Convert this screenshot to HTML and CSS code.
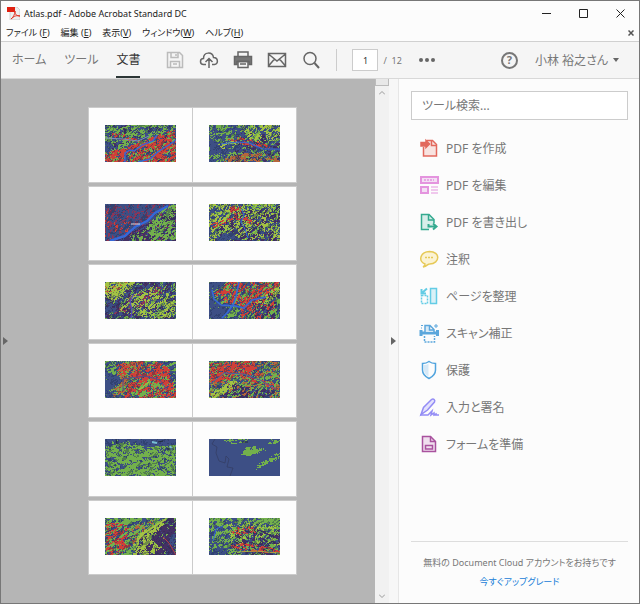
FILE: index.html
```html
<!DOCTYPE html>
<html lang="ja">
<head>
  <meta charset="UTF-8" />
  <meta name="viewport" content="width=device-width, initial-scale=1.0" />
  <title>Atlas.pdf - Adobe Acrobat Standard DC</title>
  <link rel="stylesheet" href="styles.css">
</head>
<body>
  <div class="window">

    <!-- Title bar -->
    <header class="titlebar">
      <svg class="app-icon" viewBox="0 0 13 13">
        <path d="M3 0h7l3 3v10H3z" fill="#eee" stroke="#bbb" stroke-width=".6"/>
        <path d="M0 0h8v5H0z" fill="#e02010"/>
        <path d="M4 12c2-1 4-5 4-8 0 4 2 5 5 5-3-1-6 0-9 3z" fill="none" stroke="#e03020"/>
      </svg>
      <h1 class="title">Atlas.pdf - Adobe Acrobat Standard DC</h1>
      <div class="window-buttons">
        <button type="button" aria-label="最小化"><svg viewBox="0 0 9 9"><path d="M0 4.5h9"/></svg></button>
        <button type="button" aria-label="最大化"><svg viewBox="0 0 9 9"><path d="M.5.5h8v8h-8z"/></svg></button>
        <button type="button" aria-label="閉じる"><svg viewBox="0 0 9 9"><path d="M.5.5l8 8M8.5.5l-8 8"/></svg></button>
      </div>
    </header>

    <!-- Menu bar -->
    <nav class="menubar">
      <button type="button">ファイル (<u>F</u>)</button>
      <button type="button">編集 (<u>E</u>)</button>
      <button type="button">表示(<u>V</u>)</button>
      <button type="button">ウィンドウ(<u>W</u>)</button>
      <button type="button">ヘルプ(<u>H</u>)</button>
      <button type="button" class="close-doc" aria-label="文書を閉じる"><svg viewBox="0 0 6 6"><path d="M.5.5l5 5M5.5.5l-5 5"/></svg></button>
    </nav>

    <!-- Toolbar -->
    <div class="toolbar">
      <div class="tabs">
        <button type="button" class="tab">ホーム</button>
        <button type="button" class="tab">ツール</button>
        <button type="button" class="tab active">文書</button>
      </div>
      <div class="actions">
        <button type="button" class="disabled" aria-label="保存"><svg viewBox="0 0 20 20"><path d="M2.5 2.5h12l3 3v12h-15zM6 2.5v5h7v-5M5.500 17.500v-6h9v6M11 4v2M8 14h4"/></svg></button>
        <button type="button" aria-label="アップロード"><svg viewBox="0 0 20 20"><path d="M7 14.500H4.500C.5 14.500.5 8.500 4.500 8.500 4.500 1.500 13.500 1.500 14.500 7.500c5 0 5 7 1 7H13M10 18V9M6.500 12L10 8.500l3.500 3.500"/></svg></button>
        <button type="button" aria-label="印刷"><svg viewBox="0 0 20 20"><path d="M5 6V2h10v4"/><path d="M1.500 6.500h17v8H16v-3H4v3H1.500z" fill="currentColor"/><path d="M5 11.500h10v6H5zM7 14h6"/></svg></button>
        <button type="button" aria-label="メール"><svg viewBox="0 0 20 20"><path d="M1.500 3.500h17v13h-17zM1.500 4l8.500 7 8.500-7M1.500 16l6-7M18.500 16l-6-7"/></svg></button>
        <button type="button" aria-label="検索"><svg viewBox="0 0 20 20"><circle cx="9" cy="8.500" r="6"/><path d="M13.500 13l4.500 5" stroke-width="2"/></svg></button>
      </div>
      <div class="pager">
        <input type="text" id="page" value="1" aria-label="ページ">
        <label for="page">/&nbsp; 12</label>
      </div>
      <button type="button" class="more" aria-label="その他"><svg viewBox="0 0 16 4"><circle cx="2" cy="2" r="2"/><circle cx="8" cy="2" r="2"/><circle cx="14" cy="2" r="2"/></svg></button>
      <div class="account">
        <button type="button" class="help" aria-label="ヘルプ">?</button>
        <button type="button" class="user">小林 裕之さん <span class="caret"></span></button>
      </div>
    </div>

    <main class="content">
      <!-- Document -->
      <section class="document">
        <button type="button" class="side-toggle" aria-label="ナビゲーションパネル"><span class="arrow"></span></button>
        <div class="pages" id="pages"></div>
      </section>
      <div class="scrollbar">
        <span class="thumb"></span>
        <svg viewBox="0 0 6 4"><path d="M0 3.500l3-3 3 3"/></svg>
        <svg class="down" viewBox="0 0 6 4"><path d="M0 .5l3 3 3-3"/></svg>
      </div>
      <button type="button" class="splitter" aria-label="ツールパネル"><span class="arrow"></span></button>

      <!-- Tools panel -->
      <aside class="tools">
        <input type="text" class="search" placeholder="ツール検索..." aria-label="ツール検索">
        <ul class="tool-list">
          <li><a href="#" class="tool">
            <svg viewBox="0 0 20 20" stroke="#e2685c"><path d="M4.500 9v9h13V6.500l-4-4h-6" fill="#f8e3e0"/><path d="M12.500 2.500v5h5"/><path d="M2 4.500h5V2.500L10.500 6 7 9.500V8H2z" fill="#e2685c"/></svg>
            PDF を作成</a></li>
          <li><a href="#" class="tool">
            <svg viewBox="0 0 20 20" stroke="#e494de"><path d="M2 2h17v6H2zM2 12h7v6H2z" fill="#f3dff4" stroke-width="2"/><path d="M5 5h10" stroke-dasharray="2 1"/><path d="M12 12h7M12 15h7M12 18h7" stroke-width="1"/></svg>
            PDF を編集</a></li>
          <li><a href="#" class="tool">
            <svg viewBox="0 0 20 20" stroke="#35aa90"><path d="M10 17.500H2.500v-15H10l5 5V11" fill="#d7eeea"/><path d="M9.500 2.500V8H15"/><path d="M9.500 12v2.500H17M14 11.500l3.500 3-3.500 3" stroke-width="2"/></svg>
            PDF を書き出し</a></li>
          <li><a href="#" class="tool">
            <svg viewBox="0 0 20 20" stroke="#e6c957"><path d="M6 15C-1 12 1 3 10.500 2.500c11 0 11 12 0 12.500-2 0-2 2-6.500 3 2-1 2-2 2-3z" fill="#fbf3d4"/><path d="M6 8.500h9" stroke-dasharray="2 1"/></svg>
            注釈</a></li>
          <li><a href="#" class="tool">
            <svg viewBox="0 0 20 20" stroke="#63cce5"><path d="M11.500 2.500h6v15h-6z" fill="#d9f1f7"/><path d="M2.500 9.500h6v8h-6z" stroke-dasharray="2 1"/><path d="M8 2.500L3 7M2.500 3v4.500H7" stroke-width="2"/></svg>
            ページを整理</a></li>
          <li><a href="#" class="tool">
            <svg viewBox="0 0 20 20" stroke="#5ca7dc"><path d="M2 7v6M18.500 7v6M1 10h19" stroke-width="3"/><path d="M6 9V2.500h5l4 4V9M10.500 2.500V7H15" fill="#d9eaf6"/><path d="M5.500 13v6h10v-6" stroke-dasharray="2 1"/><path d="M2 2.500h2M17 1v4M15 3h4M2 5h1" stroke-width="1"/></svg>
            スキャン補正</a></li>
          <li><a href="#" class="tool">
            <svg viewBox="0 0 20 20" stroke="#51a4de"><path d="M10 1.500c2 1.500 4 2 6.500 2V10c0 4-2.500 6.500-6.500 8.500C6 16.500 3.500 14 3.500 10V3.500c2.500 0 4.500-.5 6.500-2z"/><path d="M9.500 3.500v13C7 15 5 13 5 10V5c2 0 3-.5 4.500-1.500z" fill="#d6e9f7" stroke="none"/></svg>
            保護</a></li>
          <li><a href="#" class="tool">
            <svg viewBox="0 0 20 20" stroke="#938cf5"><path d="M2 17.500l2.500-7 8-8c2-1.500 4 .5 3 2.500l-7 8z" fill="#e3e1fc"/><path d="M1 18h8l4-4-1 4 3-2v2l2-1v1h3"/></svg>
            入力と署名</a></li>
          <li><a href="#" class="tool">
            <svg viewBox="0 0 20 20" stroke="#a9529e"><path d="M3.500 2.500h8l5 5v10h-13z" fill="#f0dfee"/><path d="M11.500 2.500v5h5M6.500 11.500h7v3.500h-7z"/></svg>
            フォームを準備</a></li>
        </ul>
        <footer class="upgrade">
          <p>無料の Document Cloud アカウントをお持ちです</p>
          <a href="#">今すぐアップグレード</a>
        </footer>
      </aside>
    </main>
  </div>
  <script src="maps.js"></script>
</body>
</html>
```
FILE: styles.css
```css
* {
  box-sizing: border-box;
}

body {
  margin: 0;
  font-family: "Noto Sans", "Noto Sans CJK JP", sans-serif;
  font-size: 12px;
  font-feature-settings: "palt";
  color: #777;
}

button,
input {
  font: inherit;
  font-feature-settings: inherit;
  color: inherit;
}

button {
  padding: 0;
  border: none;
  background: none;
  white-space: nowrap;
}

svg {
  display: block;
  fill: none;
}

.window {
  display: flex;
  flex-direction: column;
  height: 100vh;
  border: 1px solid #777;
  background: #fcfcfc;
}

/* Title bar */
.titlebar {
  display: flex;
  align-items: center;
  height: 24px;
  padding-left: 6px;
}
.app-icon {
  width: 13px;
  height: 13px;
  margin-right: 4px;
}
.title {
  margin: 0;
  font-size: 9px;
  font-weight: 400;
  color: #222;
}
.window-buttons {
  display: flex;
  margin-left: auto;
}
.window-buttons button {
  display: flex;
  justify-content: center;
  width: 37px;
}
.window-buttons svg {
  width: 9px;
  height: 9px;
  stroke: #222;
}

/* Menu bar */
.menubar {
  display: flex;
  align-items: center;
  gap: 11px;
  height: 16px;
  padding: 0 5px;
  font-size: 9px;
  line-height: 16px;
  color: #222;
}
.close-doc {
  margin-left: auto;
}
.close-doc svg {
  width: 6px;
  height: 6px;
  stroke: #555;
  stroke-width: 1.5;
}

/* Toolbar */
.toolbar {
  display: flex;
  align-items: center;
  height: 38px;
  padding: 0 20px 0 11px;
  border-top: 1px solid #d0d0d0;
  border-bottom: 1px solid #d8d8d8;
  background: #f5f5f5;
}
.tabs {
  display: flex;
  align-self: stretch;
  gap: 18px;
}
.tab {
  border-bottom: 2px solid transparent;
}
.tab.active {
  color: #333;
  border-color: #2c3636;
}
.actions {
  display: flex;
  gap: 14px;
  margin-left: 25px;
  padding-right: 15px;
  border-right: 1px solid #ccc;
}
.actions svg {
  width: 20px;
  height: 22px;
  stroke: #666;
  stroke-width: 1.5;
}
.actions .disabled svg {
  stroke: #bbb;
}
.pager {
  display: flex;
  align-items: center;
  gap: 5px;
  margin-left: 15px;
  font-size: 9px;
}
.pager input {
  width: 26px;
  height: 22px;
  border: 1px solid #ccc;
  background: #fff;
  text-align: center;
  color: #333;
}
.more {
  margin-left: 17px;
}
.more svg {
  width: 16px;
  height: 4px;
  fill: #666;
}
.account {
  display: flex;
  align-items: center;
  gap: 17px;
  margin-left: auto;
}
.help {
  width: 17px;
  height: 17px;
  border: 2px solid #777;
  border-radius: 50%;
  font-size: 11px;
  font-weight: 700;
  line-height: 12px;
}
.user {
  display: flex;
  align-items: center;
  gap: 5px;
}
.caret {
  border: 3px solid transparent;
  border-top: 4px solid #666;
  border-bottom: none;
}

/* Document */
.content {
  display: flex;
  flex: 1;
  min-height: 0;
}
.document {
  display: flex;
  flex: 1;
  background: #b5b5b5;
}
.side-toggle {
  width: 8px;
}
.arrow {
  display: block;
  width: 5px;
  margin: 0 auto;
  border: 4px solid transparent;
  border-left: 5px solid #666;
  border-right: none;
}
.pages {
  display: grid;
  grid-template-columns: 103px 103px;
  grid-auto-rows: 1fr;
  gap: 5px 1px;
  margin: 0 auto;
  padding: 29px 0;
}
.page {
  padding: 17px 16px 0 16px;
  background: #fdfdfd;
  outline: 1px solid #cbcbcb;
}
.map {
  width: 100%;
  height: 37px;
}
.scrollbar {
  display: flex;
  flex-direction: column;
  align-items: center;
  width: 14px;
  padding-bottom: 5px;
  background: #f1f1f1;
}
.scrollbar svg {
  width: 6px;
  height: 4px;
  margin-top: 5px;
  stroke: #999;
}
.scrollbar .down {
  margin-top: auto;
}
.thumb {
  width: 14px;
  height: 7px;
  border: 1px solid #bbb;
  border-top: none;
  background: #e8e8e8;
}
.splitter {
  width: 10px;
  border-right: 1px solid #e6e6e6;
  background: #f7f7f7;
}

/* Tools panel */
.tools {
  display: flex;
  flex-direction: column;
  width: 240px;
  padding: 12px 11px 12px 12px;
}
.search {
  width: 100%;
  height: 29px;
  padding: 0 10px;
  border: 1px solid #ccc;
  background: #fff;
}
.search::placeholder {
  color: #777;
  opacity: 1;
}
.tool-list {
  margin: 0;
  padding: 9px 8px;
  list-style: none;
}
.tool {
  display: flex;
  align-items: center;
  gap: 7px;
  height: 37px;
  color: #777;
  text-decoration: none;
}
.tool svg {
  width: 20px;
  height: 20px;
  stroke-width: 1.5;
}
.upgrade {
  margin-top: auto;
  padding-top: 11px;
  border-top: 1px solid #ddd;
  font-size: 9px;
  line-height: 19px;
  text-align: center;
  white-space: nowrap;
}
.upgrade p {
  margin: 0;
}
.upgrade a {
  color: #2080d8;
  text-decoration: none;
}
```
FILE: maps.js
```js
// Thumbnails of the atlas pages. Each map is a grid of small cells,
// coloured by slope (noise stretched along the ridges) and by zone.
const W = 71;
const H = 37;
const NAVY = "#3d4f85";
const BLUE = "#3568d8";
const GREEN = "#73b04c";
const LIME = "#a3c244";
const RED = "#cf4038";
const PURPLE = "#443063";
const WINE = "#8b3658";
const ORANGE = "#b5663c";

const ALL = [0, 0, W, 0, W, H, 0, H];

// layer: colour, polygon, density, ridge angle
const maps = [
  { layers: [[GREEN, ALL, 0.52, -25], [PURPLE, ALL, 0.2, -25], [RED, [71, 4, 71, 37, 0, 37, 0, 28, 22, 22, 48, 12], 0.58, -30], [RED, [8, 7, 30, 12, 34, 17, 5, 14], 0.4, 0]],
    lines: [[BLUE, "M20 37v-9l5-3 4 1 8-6 11-4 4-6M33 37l12-3 9-8 10-6 7-5", 1.4], ["#7e8fba", "M0 13l18 1 15 2 11-5", 1]] },
  { layers: [[GREEN, ALL, 0.45, -30], [LIME, [26, 0, 71, 0, 71, 15, 46, 18], 0.48, -55], [PURPLE, [30, 8, 71, 9, 71, 37, 20, 37], 0.32, 15], [RED, [18, 15, 32, 11, 61, 21, 58, 24, 36, 20], 0.5, 15], [ORANGE, [16, 32, 40, 27, 71, 31, 71, 37, 14, 37], 0.45, 0], [NAVY, [0, 12, 12, 19, 36, 20, 30, 26, 9, 30, 0, 27], 0.85, -20], [LIME, [8, 20, 22, 16, 36, 17, 28, 21, 15, 24], 0.48, -20]],
    lines: [[BLUE, "M12 19l17-2 11 1 14 6 17 0", 1.2]] },
  { layers: [[WINE, ALL, 0.36, -70], [PURPLE, [71, 4, 71, 37, 10, 37, 30, 26], 0.6, -35], [GREEN, [71, 0, 71, 37, 47, 37, 42, 24, 58, 4], 0.6, -42], [GREEN, [27, 31, 47, 24, 50, 37, 27, 37], 0.35, -42], [RED, [0, 2, 8, 12, 25, 12, 26, 26, 0, 36], 0.25, -60]],
    lines: [[BLUE, "M5 37l15-5 10-9 12-6 8-8 13-7", 2.4], ["#d8d8e0", "M26 20h9", 1]] },
  { layers: [[LIME, ALL, 0.54, -50], [PURPLE, [24, 8, 71, 2, 71, 37, 0, 37], 0.38, -45], [GREEN, ALL, 0.25, -40], [RED, [22, 0, 33, 3, 33, 11, 50, 20, 48, 24, 30, 15, 0, 25, 0, 20, 20, 14], 0.42, -20], [NAVY, [8, 33, 20, 27, 32, 36, 10, 37], 0.88, 0]],
    lines: [[BLUE, "M33 5l2 7-3 6 4 7 3 9", 1]] },
  { layers: [[PURPLE, ALL, 0.45, -45], [LIME, [25, 14, 48, 4, 71, 14, 71, 35, 48, 37, 10, 29], 0.5, -40], [GREEN, ALL, 0.28, -40], [WINE, [8, 32, 30, 13, 60, 3, 58, 10, 26, 31], 0.4, -35], [LIME, [0, 0, 31, 0, 10, 19, 0, 16], 0.7, -30], [ORANGE, [2, 4, 21, 0, 18, 7, 0, 11], 0.35, 0]],
    lines: [["#574bc2", "M28 13l-3 7 2 7-1 9", 1.2]] },
  { layers: [[GREEN, ALL, 0.5, -55], [RED, [20, 0, 71, 0, 62, 37, 32, 37, 32, 25, 14, 20, 6, 10], 0.48, -50], [PURPLE, [45, 20, 71, 5, 71, 37, 45, 37], 0.4, -50], [LIME, [47, 20, 71, 3, 71, 12, 50, 25], 0.6, -40], [NAVY, [0, 0, 18, 0, 4, 9, 3, 23, 19, 22, 18, 37, 0, 37], 0.95, 0]],
    lines: [[BLUE, "M30 0l-3 14-3 9-6 8-5 5M3 8l2 9 7 6 14 1 9 2 8-8 14-3", 1.6]] },
  { layers: [[GREEN, ALL, 0.45, -35], [ORANGE, [15, 2, 40, 0, 24, 32, 6, 37], 0.5, -40], [RED, [28, 12, 50, 0, 63, 5, 68, 25, 71, 37, 19, 37], 0.62, -25], [RED, [12, 3, 40, 0, 30, 14, 14, 14], 0.4, -25], [GREEN, [24, 35, 40, 18, 60, 25, 50, 37], 0.45, -40], [NAVY, [0, 14, 12, 14, 18, 20, 5, 28, 7, 37, 0, 37], 0.96, 0]],
    lines: [["#534e91", "M18 30v-12l22-3 15 4 7 10", 1], [LIME, "M34 29l10-8", 1.6]] },
  { layers: [[GREEN, ALL, 0.5, -30], [ORANGE, ALL, 0.32, -35], [RED, [0, 2, 44, 0, 53, 16, 34, 13, 14, 21, 0, 22], 0.55, -25], [RED, [27, 13, 65, 22, 70, 29, 36, 19], 0.5, 20], [PURPLE, [0, 37, 18, 22, 68, 30, 60, 37], 0.44, -30], [LIME, [0, 34, 24, 19, 31, 22, 7, 37, 0, 37], 0.72, -35]],
    lines: [["#4f5c9f", "M0 24l15-12 20 1 16 6 16 9", 1]] },
  { layers: [[GREEN, [0, 8, 19, 3, 42, 8, 71, 6, 71, 37, 0, 37], 0.65, 12], [GREEN, [3, 2, 35, 0, 34, 9, 4, 14], 0.25, 12]],
    lines: [["#78bed6", "M47 3l5 1M65 7l2 4", 2], ["#222d3d", "M11 0l1 5M53 3l5-1M62 10h7", 1]] },
  { layers: [[GREEN, [32, 16, 38, 8, 48, 7, 49, 14, 40, 17], 0.92, 0], [GREEN, [46, 31, 51, 24, 71, 13, 71, 19, 52, 28], 0.6, -35], [GREEN, [16, 0, 38, 0, 34, 5, 19, 5], 0.5, 0], [GREEN, [58, 0, 71, 1, 69, 5, 59, 5], 0.55, 0], [GREEN, [48, 7, 53, 7, 55, 12, 50, 12], 0.45, 0]],
    lines: [["#343c62", "M6 0l-3 5 5 3-1 6 3 8 6 2 1-7 3 3-2 8 6 1-3 8", 0.7], ["#222d3d", "M33 3h6", 1]] },
  { layers: [[GREEN, ALL, 0.58, -35], [ORANGE, [29, 8, 48, 2, 43, 21, 25, 27], 0.38, -40], [RED, [0, 4, 20, 6, 30, 28, 11, 37, 0, 37], 0.43, -25], [PURPLE, [60, 0, 71, 0, 71, 37, 30, 37, 35, 22], 0.72, -45], [LIME, [31, 18, 62, 0, 57, 9, 46, 21, 57, 29, 46, 37, 29, 37], 0.55, -52], [NAVY, [65, 17, 71, 15, 71, 31, 65, 27], 0.9, 0]],
    lines: [[LIME, "M36 17L61 1", 2], [RED, "M58 19l6 6 7 12", 0.8]] },
  { layers: [[GREEN, ALL, 0.5, -30], [LIME, [17, 4, 71, 6, 71, 27, 24, 28], 0.36, -40], [PURPLE, [24, 12, 71, 11, 71, 37, 24, 37], 0.4, 15], [RED, [22, 9, 44, 8, 47, 15, 30, 17, 19, 13], 0.42, 10], [RED, [20, 28, 34, 25, 71, 31, 71, 35, 36, 34], 0.48, 10], [GREEN, [48, 0, 71, 0, 71, 8, 61, 7], 0.86, 0], [NAVY, [0, 27, 15, 28, 19, 37, 0, 37], 0.65, 0]],
    lines: [[BLUE, "M4 23l3-12 7-3", 1], [LIME, "M28 34l19-1 24 2", 0.8]] }
];

function hash(x, y, seed) {
  let n = Math.imul(x, 374761393) + Math.imul(y, 668265263) + Math.imul(seed, 1442695041);
  n = Math.imul(n ^ (n >>> 13), 1274126177);
  return ((n ^ (n >>> 16)) >>> 0) / 4294967296;
}

function noise(x, y, seed) {
  const xi = Math.floor(x);
  const yi = Math.floor(y);
  const fx = x - xi;
  const fy = y - yi;
  const top = hash(xi, yi, seed) * (1 - fx) + hash(xi + 1, yi, seed) * fx;
  const bottom = hash(xi, yi + 1, seed) * (1 - fx) + hash(xi + 1, yi + 1, seed) * fx;
  return top * (1 - fy) + bottom * fy;
}

function inside(x, y, points) {
  let hit = false;
  for (let i = 0, j = points.length - 2; i < points.length; j = i, i += 2) {
    const [ax, ay, bx, by] = [points[i], points[i + 1], points[j], points[j + 1]];
    if (ay > y !== by > y && x < ((bx - ax) * (y - ay)) / (by - ay) + ax) {
      hit = !hit;
    }
  }
  return hit;
}

function drawLayer([color, points, density, angle], seed) {
  const cos = Math.cos((angle * Math.PI) / 180);
  const sin = Math.sin((angle * Math.PI) / 180);
  let d = "";
  for (let y = 0; y < H; y++) {
    for (let x = 0; x < W; x++) {
      const u = (x * cos + y * sin) / 3;
      const v = (y * cos - x * sin) / 1.4;
      const slope = noise(u, v, seed) * 0.7 + hash(x, y, seed + 50) * 0.3;
      const edge = (hash(x, y, seed + 90) - 0.5) * 4;
      if (slope < 0.5 + (density - 0.5) * 0.75 && inside(x + 0.5 + edge, y + 0.5, points)) {
        d += `M${x} ${y}h1v1h-1z`;
      }
    }
  }
  return `<path fill="${color}" d="${d}"/>`;
}

const pages = document.getElementById("pages");

maps.forEach((map, i) => {
  const layers = map.layers.map((layer, j) => drawLayer(layer, i * 10 + j + 1)).join("");
  const lines = map.lines.map(([color, d, width]) => `<path stroke="${color}" stroke-width="${width}" d="${d}"/>`).join("");
  // hill shading, left out on the flat sea map
  const shade = i === 9 ? "" : drawLayer(["#1c2c5060", ALL, 0.36, -40], i + 300);
  const page = document.createElement("div");
  page.className = "page";
  page.innerHTML = `<svg class="map" viewBox="0 0 ${W} ${H}" preserveAspectRatio="none" role="img" aria-label="${i + 1}">
    <rect width="${W}" height="${H}" fill="${NAVY}"/>${layers}${shade}${lines}</svg>`;
  pages.appendChild(page);
});
```
